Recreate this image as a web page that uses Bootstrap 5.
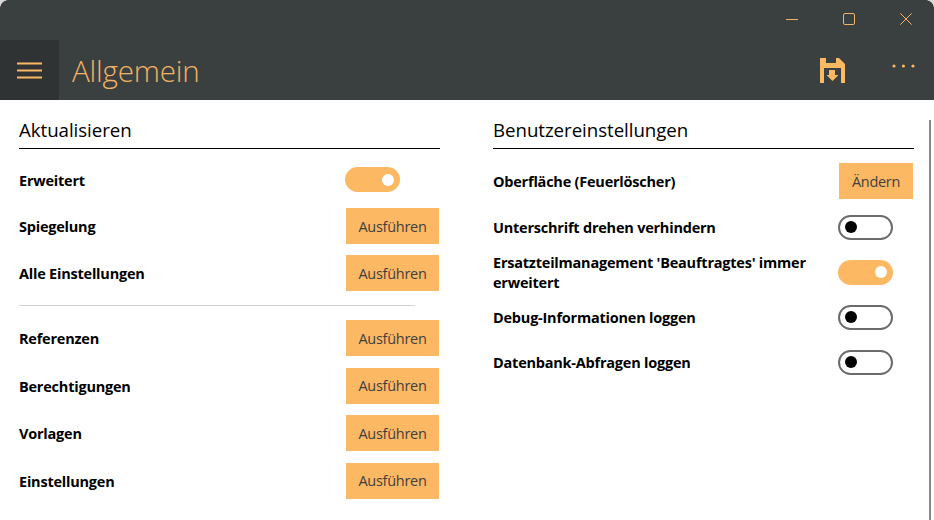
<!DOCTYPE html>
<html lang="de">
<head>
<meta charset="utf-8">
<title>Allgemein</title>
<link href="https://cdn.jsdelivr.net/npm/bootstrap@5.3.0/dist/css/bootstrap.min.css" rel="stylesheet">
<style>
html,body{height:100%;overflow:hidden;background:#fff}
body{font-family:"Open Sans","Noto Sans",sans-serif;color:#000;position:relative}
.app-top{background:#3a3f3f;height:100px}
.win-bar{height:40px}
.win-btn{width:57px;height:40px;padding-bottom:2px}
.cmd-bar{height:60px}
.burger{width:59px;height:60px;background:#2f3333;padding-top:1px}
.app-title{font-family:"Open Sans",sans-serif;font-weight:300;font-size:29.6px;color:#f4b264;margin-left:13px;line-height:62px;height:60px;letter-spacing:-.2px}
.cmd-btn{height:60px}
.save-btn{width:87px;padding-top:1px}
.more-btn{width:58px;padding-bottom:8px}
.content{height:420px}
.pane-l{width:421px;margin-left:19px;margin-top:17px}
.pane-r{width:421px;margin-left:53px;margin-top:17px}
.pane-h{font-size:18.7px;line-height:26px;height:32px;border-bottom:1px solid #000;margin:0;font-weight:400;letter-spacing:-.05px}
.set-row{display:flex;align-items:center;justify-content:space-between;height:36px;margin-bottom:11.5px}
.set-lab{font-size:14.5px;font-weight:700;line-height:20px;letter-spacing:-.22px;color:#000;padding-top:2px}
.run-btn{background:#fdb863;color:#3f3f3f;border:0;border-radius:0;font-size:14.5px;height:36px;width:93px;padding:1px 0 0;letter-spacing:-.28px;margin-right:1px}
.run-btn:hover{background:#fdb863;color:#3f3f3f}
.chg-btn{width:74px}
.tog{width:55px;height:25px;border-radius:13px;display:flex;align-items:center;flex:none}
.tog i{display:block;width:12px;height:12px;border-radius:50%}
.tog-on{background:#fdb863;justify-content:flex-end;padding-right:6px;margin-right:40px}
.tog-on i{background:#fff}
.tog-off{border:2px solid #6b6b6b;background:#fff;padding-left:5px;margin-right:21px}
.tog-off i{background:#000}
.tog-r.tog-on{margin-right:21px}
.sep{height:1px;background:#d3d3d3;width:396px;margin:0 0 14px}
.first-l{margin-bottom:10.5px}
.row-tight{margin-bottom:11px}
.row-before-sep{margin-bottom:14px}
.first-gap{margin-top:12.5px}
.pane-first{margin-top:14px}
.r-a{height:36px;margin-bottom:15px}
.r-b{height:26px;margin-bottom:11px}
.r-c{height:42px;margin-bottom:11px}
.r-d{height:26px;margin-bottom:19px}
.vscroll{position:absolute;right:3px;top:120px;bottom:0;width:2px;background:#8a8a8a}
.corner{position:absolute;top:0;width:8px;height:8px}
.corner-l{left:0;background:radial-gradient(circle at 100% 100%,transparent 7.5px,#d8d8d8 8px)}
.corner-r{right:0;background:radial-gradient(circle at 0 100%,transparent 7.5px,#d8d8d8 8px)}
</style>
</head>
<body>
<div class="app-top">
  <div class="win-bar d-flex justify-content-end">
    <div class="win-btn d-flex align-items-center justify-content-center"><svg width="12" height="12" viewBox="0 0 12 12"><path d="M0 6.5h12" stroke="#f4b264" stroke-width="1"/></svg></div>
    <div class="win-btn d-flex align-items-center justify-content-center"><svg width="12" height="12" viewBox="0 0 12 12"><rect x=".5" y=".5" width="11" height="11" rx="1.5" fill="none" stroke="#f4b264"/></svg></div>
    <div class="win-btn d-flex align-items-center justify-content-center"><svg width="12" height="12" viewBox="0 0 12 12"><path d="M.3.3l11.4 11.4M11.7.3L.3 11.7" stroke="#f4b264" stroke-width="1"/></svg></div>
  </div>
  <div class="cmd-bar d-flex align-items-center">
    <div class="burger d-flex align-items-center justify-content-center"><svg width="25" height="17" viewBox="0 0 25 17"><path d="M0 1.5h25M0 8.5h25M0 15.5h25" stroke="#fdb863" stroke-width="2"/></svg></div>
    <div class="app-title flex-grow-1">Allgemein</div>
    <div class="cmd-btn save-btn d-flex align-items-center justify-content-center"><svg width="25" height="25" viewBox="0 0 25 25"><path fill="#fdb863" fill-rule="evenodd" d="M0 0H6V5H16V0H19L25 6V25H21V10H4V25H0Z"/><path fill="#fdb863" d="M9 12h6v5h3.5l-6 6-6-6H9z"/></svg></div>
    <div class="cmd-btn more-btn d-flex align-items-center justify-content-center"><svg width="28" height="4" viewBox="0 0 28 4"><circle cx="3" cy="2" r="1.6" fill="#fdb863"/><circle cx="12.4" cy="2" r="1.6" fill="#fdb863"/><circle cx="22" cy="2" r="1.6" fill="#fdb863"/></svg></div>
  </div>
</div>
<div class="content d-flex">
  <div class="pane-l">
    <h2 class="pane-h">Aktualisieren</h2>
    <div class="first-gap">
      <div class="set-row first-l"><span class="set-lab">Erweitert</span><span class="tog tog-on"><i></i></span></div>
      <div class="set-row row-tight"><span class="set-lab">Spiegelung</span><button class="btn run-btn">Ausführen</button></div>
      <div class="set-row row-before-sep"><span class="set-lab">Alle Einstellungen</span><button class="btn run-btn">Ausführen</button></div>
      <div class="sep"></div>
      <div class="set-row"><span class="set-lab">Referenzen</span><button class="btn run-btn">Ausführen</button></div>
      <div class="set-row"><span class="set-lab">Berechtigungen</span><button class="btn run-btn">Ausführen</button></div>
      <div class="set-row"><span class="set-lab">Vorlagen</span><button class="btn run-btn">Ausführen</button></div>
      <div class="set-row"><span class="set-lab">Einstellungen</span><button class="btn run-btn">Ausführen</button></div>
    </div>
  </div>
  <div class="pane-r">
    <h2 class="pane-h">Benutzereinstellungen</h2>
    <div class="pane-first">
      <div class="set-row r-a"><span class="set-lab">Oberfläche (Feuerlöscher)</span><button class="btn run-btn chg-btn">Ändern</button></div>
      <div class="set-row r-b"><span class="set-lab">Unterschrift drehen verhindern</span><span class="tog tog-off tog-r"><i></i></span></div>
      <div class="set-row r-c"><span class="set-lab">Ersatzteilmanagement 'Beauftragtes' immer<br>erweitert</span><span class="tog tog-on tog-r"><i></i></span></div>
      <div class="set-row r-d"><span class="set-lab">Debug-Informationen loggen</span><span class="tog tog-off tog-r"><i></i></span></div>
      <div class="set-row r-d"><span class="set-lab">Datenbank-Abfragen loggen</span><span class="tog tog-off tog-r"><i></i></span></div>
    </div>
  </div>
</div>
<div class="vscroll"></div>
<div class="corner corner-l"></div>
<div class="corner corner-r"></div>
<script src="https://cdn.jsdelivr.net/npm/bootstrap@5.3.0/dist/js/bootstrap.bundle.min.js"></script>
</body>
</html>
